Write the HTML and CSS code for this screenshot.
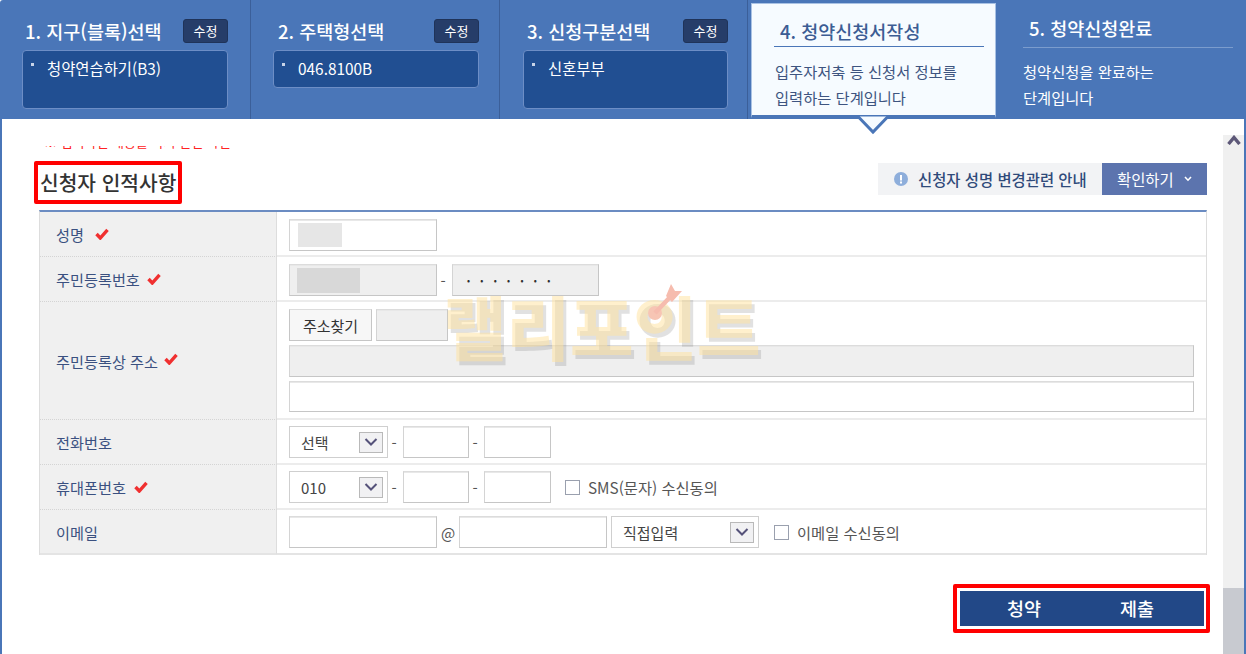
FILE: index.html
```html
<!DOCTYPE html>
<html lang="ko">
<head>
<meta charset="utf-8">
<title>청약신청서작성</title>
<link rel="stylesheet" href="styles.css">
</head>
<body>
<div class="page">
  <header class="steps">
    <section class="step step-1">
      <div class="step-head"><h2>1. 지구(블록)선택</h2><span class="badge">수정</span></div>
      <div class="picked tall"><i></i>청약연습하기(B3)</div>
    </section>
    <section class="step step-2">
      <div class="step-head"><h2>2. 주택형선택</h2><span class="badge">수정</span></div>
      <div class="picked short"><i></i>046.8100B</div>
    </section>
    <section class="step step-3">
      <div class="step-head"><h2>3. 신청구분선택</h2><span class="badge">수정</span></div>
      <div class="picked tall"><i></i>신혼부부</div>
    </section>
    <section class="step-now">
      <h2>4. 청약신청서작성</h2>
      <p>입주자저축 등 신청서 정보를<br>입력하는 단계입니다</p>
      <svg class="pointer" width="36" height="20" viewBox="0 0 36 20"><path d="M0 1.5H3L18 17L33 1.5H36" fill="#f6fbff" stroke="#4a76b8" stroke-width="3"/></svg>
    </section>
    <section class="step-next">
      <h2>5. 청약신청완료</h2>
      <p>청약신청을 완료하는<br>단계입니다</p>
    </section>
  </header>

  <main class="main">
    <div class="content">
      <div class="clipped-note"><span>※ 입력하신 내용을 다시 한번 확인</span></div>
      <div class="section-head">
        <h1 class="section-title">신청자 인적사항</h1>
        <div class="notice">
          <span class="notice-text">
            <svg width="14" height="14" viewBox="0 0 14 14"><circle cx="7" cy="7" r="7" fill="#8eaedb"/><rect x="6" y="3" width="2" height="5.5" fill="#fff"/><rect x="6" y="9.5" width="2" height="2" fill="#fff"/></svg>
            신청자 성명 변경관련 안내
          </span>
          <span class="notice-btn">확인하기
            <svg width="8" height="6" viewBox="0 0 8 6"><path d="M1 1L4 4.2L7 1" fill="none" stroke="#fff" stroke-width="1.6"/></svg>
          </span>
        </div>
      </div>

      <div class="form">
        <div class="row">
          <div class="label">성명<svg class="check gap-w" viewBox="0 0 14 12"><path d="M1.5 6L5.3 10L12.5 1.8" fill="none" stroke="#f03030" stroke-width="3.4"/></svg></div>
          <div class="cell"><div class="field w148"><span class="mosaic m1"></span></div></div>
        </div>
        <div class="row">
          <div class="label">주민등록번호<svg class="check" viewBox="0 0 14 12"><path d="M1.5 6L5.3 10L12.5 1.8" fill="none" stroke="#f03030" stroke-width="3.4"/></svg></div>
          <div class="cell">
            <div class="field w148 off"><span class="mosaic m2"></span></div>
            <span class="sep">-</span>
            <div class="field w147 off dots">•••••••</div>
          </div>
        </div>
        <div class="row row-addr">
          <div class="label">주민등록상 주소<svg class="check up" viewBox="0 0 14 12"><path d="M1.5 6L5.3 10L12.5 1.8" fill="none" stroke="#f03030" stroke-width="3.4"/></svg></div>
          <div class="cell cell-addr">
            <div class="addr-top">
              <button class="find" type="button">주소찾기</button>
              <div class="field w72 off"></div>
            </div>
            <div class="field full off"></div>
            <div class="field full last"></div>
          </div>
        </div>
        <div class="row">
          <div class="label">전화번호</div>
          <div class="cell tight">
            <div class="select w99"><span>선택</span><b class="arrow"><svg width="14" height="8" viewBox="0 0 14 8"><path d="M1.5 1L7 6.5L12.5 1" fill="none" stroke="#55527a" stroke-width="2"/></svg></b></div>
            <span class="sep">-</span><div class="field w66"></div>
            <span class="sep">-</span><div class="field w67"></div>
          </div>
        </div>
        <div class="row">
          <div class="label">휴대폰번호<svg class="check wide" viewBox="0 0 14 12"><path d="M1.5 6L5.3 10L12.5 1.8" fill="none" stroke="#f03030" stroke-width="3.4"/></svg></div>
          <div class="cell tight">
            <div class="select w99"><span>010</span><b class="arrow"><svg width="14" height="8" viewBox="0 0 14 8"><path d="M1.5 1L7 6.5L12.5 1" fill="none" stroke="#55527a" stroke-width="2"/></svg></b></div>
            <span class="sep">-</span><div class="field w66"></div>
            <span class="sep">-</span><div class="field w67"></div>
            <span class="box"></span><span class="agree">SMS(문자) 수신동의</span>
          </div>
        </div>
        <div class="row">
          <div class="label">이메일</div>
          <div class="cell tight">
            <div class="field w148"></div>
            <span class="at">@</span>
            <div class="field w148"></div>
            <div class="select w148 sel-mail"><span>직접입력</span><b class="arrow"><svg width="14" height="8" viewBox="0 0 14 8"><path d="M1.5 1L7 6.5L12.5 1" fill="none" stroke="#55527a" stroke-width="2"/></svg></b></div>
            <span class="box"></span><span class="agree">이메일 수신동의</span>
          </div>
        </div>
      </div>

      <div class="actions">
        <div class="submit-mark"><button class="submit" type="button"><span>청약</span><span>제출</span></button></div>
      </div>
    </div>
    <div class="scrollbar">
      <svg width="14" height="10" viewBox="0 0 14 10"><path d="M1.5 9L7 2.5L12.5 9" fill="none" stroke="#5d5878" stroke-width="3.4"/></svg>
      <div class="thumb"></div>
    </div>

    <div class="watermark">
      <span>랠리포인트</span>
      <svg class="dart" width="44" height="44" viewBox="0 0 44 44"><circle cx="14" cy="29" r="7" fill="#f7c5b4"/><path d="M14 29L31 11" stroke="#f6bcae" stroke-width="4.5"/><path d="M25 12L30 0L34 7L41 7L31 18Z" fill="#f6bcae"/></svg>
    </div>
  </main>
</div>
</body>
</html>
```

FILE: styles.css
```css
* { box-sizing: border-box; }
html, body { margin: 0; padding: 0; background: #fff; }
body {
  font-family: "Noto Sans CJK KR", "Noto Sans", sans-serif;
  font-size: 15.2px;
  color: #333;
  overflow: hidden;
}
h1, h2, p { margin: 0; font-weight: normal; }
.page { display: flex; flex-direction: column; width: 1246px; height: 654px; }

/* step bar */
.steps {
  position: relative;
  z-index: 1;
  display: flex;
  height: 119px;
  flex: none;
  background: #4a76b8;
  border-top-left-radius: 3px;
  color: #fff;
}
.step {
  flex: none;
  height: 119px;
  padding-top: 19px;
  border-right: 1px solid #3b5f99;
}
.step-1 { width: 251px; padding-left: 22px; padding-right: 22px; }
.step-2 { width: 249px; padding-left: 22px; padding-right: 20px; }
.step-3 { width: 248px; padding-left: 23px; padding-right: 19px; }
.step-head {
  display: flex;
  justify-content: space-between;
  align-items: center;
  height: 24px;
  padding-left: 3px;
  margin-bottom: 7px;
}
.step-2 .step-head { padding-left: 5px; }
.step-3 .step-head { padding-left: 4px; }
.step h2, .step-now h2, .step-next h2 {
  font-size: 18.5px;
  font-weight: 500;
  line-height: 24px;
  white-space: nowrap;
}
.badge {
  width: 45px;
  height: 24px;
  background: #263d69;
  border: 1px solid #1f3359;
  border-radius: 3px;
  font-size: 13px;
  line-height: 21px;
  text-align: center;
}
.picked {
  display: flex;
  align-items: flex-start;
  padding: 7px 8px 0;
  background: #214f92;
  border: 1px solid #6d8ec6;
  border-radius: 4px;
  font-size: 15.4px;
  line-height: 20px;
}
.picked i {
  width: 3px;
  height: 3px;
  margin: 5px 13px 0 0;
  background: #c8d4e8;
  flex: none;
}
.tall { height: 59px; }
.short { height: 38px; }

.step-now {
  position: relative;
  flex: none;
  width: 245px;
  height: 115px;
  margin: 3px 0 0 3px;
  padding: 15px 11px 0 22px;
  background: #f6fbff;
  border: 1px solid #a9c2e4;
  border-bottom: 3px solid #4a76b8;
  color: #3d5480;
}
.step-now h2 {
  height: 28px;
  padding-left: 6px;
  border-bottom: 1px solid #4a76b8;
  color: #3c5d94;
}
.step-now p, .step-next p { font-size: 15.3px; line-height: 26px; }
.step-now p { margin-top: 11px; padding-left: 1px; }
.pointer { position: absolute; left: 103px; bottom: -20px; }

.step-next { flex: 1; padding: 16px 13px 0 27px; }
.step-next h2 {
  height: 32px;
  padding-left: 6px;
  border-bottom: 1px solid #7b9ccd;
}
.step-next p { margin-top: 10px; }

/* main */
.main {
  position: relative;
  flex: 1;
  display: flex;
  min-height: 0;
  border-left: 2px solid #4a76b8;
  border-right: 2px solid #4a76b8;
  background: #fff;
}
.content { flex: 1; min-width: 0; padding: 27px 13px 0 32px; }
.scrollbar {
  flex: none;
  width: 21px;
  margin-top: 16px;
  display: flex;
  flex-direction: column;
  align-items: center;
  background: #f0f0f0;
}
.scrollbar svg { flex: none; margin-bottom: 443px; }
.thumb {
  flex: 1;
  align-self: stretch;
  background: #c8cad0;
}
.clipped-note {
  height: 4px;
  padding-left: 10px;
  overflow: hidden;
  color: #f22;
  font-size: 13px;
  white-space: nowrap;
}
.clipped-note span { display: block; line-height: 14px; margin-top: -11px; }
.section-head {
  display: flex;
  justify-content: space-between;
  align-items: flex-start;
  height: 43px;
  margin-top: 11px;
  margin-right: 3px;
}
.section-title {
  width: 148px;
  height: 43px;
  padding-left: 2px;
  border: 4px solid #f00;
  border-radius: 2px;
  font-size: 20.3px;
  font-weight: 500;
  line-height: 35px;
  color: #333;
  white-space: nowrap;
}
.notice { display: flex; height: 32px; margin-top: 2px; font-size: 15.4px; }
.notice-text {
  display: flex;
  align-items: center;
  gap: 10px;
  width: 224px;
  padding-left: 16px;
  background: #f2f3f5;
  color: #2f4a7a;
  font-weight: 500;
  white-space: nowrap;
}
.notice-btn {
  display: flex;
  align-items: center;
  gap: 10px;
  width: 105px;
  padding-left: 15px;
  background: #5c74ae;
  color: #fff;
}

/* form table */
.form {
  margin: 6px 3px 0 5px;
  border-top: 2px solid #6b8cc2;
  border-left: 1px solid #ddd;
  border-right: 1px solid #ddd;
}
.row { display: flex; height: 45px; }
.row-addr { height: 118px; }
.label {
  flex: none;
  display: flex;
  align-items: center;
  width: 237px;
  padding-left: 16px;
  background: #f0f0f0;
  border-right: 1px solid #ddd;
  border-bottom: 1px dotted #d4d4d4;
  color: #3a5080;
}
.check { width: 14px; height: 12px; margin-left: 7px; flex: none; }
.check.gap-w { margin-left: 11px; }
.check.wide { margin-left: 8px; }
.check.up { margin-left: 6px; margin-top: -3px; }
.cell {
  flex: 1;
  display: flex;
  align-items: center;
  padding: 7px 0 4px 12px;
  border-bottom: 2px solid #ececec;
  color: #444;
  font-size: 15px;
}
.cell.tight { padding-top: 6px; padding-bottom: 5px; }
.row:last-child .cell { border-bottom-color: #e4e4e4; }
.row:last-child .label { border-bottom: 2px solid #e4e4e4; }
.cell-addr {
  flex-direction: column;
  align-items: stretch;
  padding: 7px 12px 0;
  gap: 4px;
}
.addr-top { display: flex; gap: 4px; }
.field {
  flex: none;
  display: flex;
  align-items: center;
  height: 32px;
  background: #fff;
  border: 1px solid #c6c6c6;
  border-top-color: #dcdcdc;
  border-left-color: #d4d4d4;
  box-shadow: inset 0 1px 0 #e8e8e8;
}
.field.off { background: #efefef; }
.field.last { height: 31px; }
.full { width: 100%; }
.w148 { width: 148px; }
.w147 { width: 147px; }
.w72 { width: 72px; }
.w66 { width: 66px; }
.w67 { width: 67px; }
.w99 { width: 99px; }
.mosaic { display: block; }
.m1 { width: 44px; height: 24px; margin-left: 8px; background: #e6e6e6; }
.m2 { width: 63px; height: 25px; margin-left: 7px; background: #d8d8d8; }
.dots {
  padding-left: 14px;
  font-size: 9px;
  letter-spacing: 10.3px;
  color: #2e2e2e;
  white-space: nowrap;
}
.sep { flex: none; width: 15px; padding-right: 3px; text-align: center; color: #555; }
.at { flex: none; width: 22px; text-align: center; color: #555; }
.find {
  width: 83px;
  height: 32px;
  padding: 0;
  background: #f7f7f7;
  border: 1px solid #c6c6c6;
  border-top-color: #dcdcdc;
  font: inherit;
  color: #333;
}
.select {
  flex: none;
  display: flex;
  align-items: center;
  justify-content: space-between;
  height: 32px;
  padding: 0 4px 0 11px;
  background: #fff;
  border: 1px solid #cfcfcf;
}
.sel-mail { margin-left: 4px; }
.arrow {
  display: flex;
  align-items: center;
  justify-content: center;
  width: 24px;
  height: 21px;
  background: #f1f1f3;
  border: 1px solid #b9b9b9;
}
.box {
  flex: none;
  width: 15px;
  height: 15px;
  margin-left: 14px;
  margin-right: 8px;
  background: #fff;
  border: 1px solid #9aa0ae;
}
.select + .box { margin-left: 15px; }
.agree { white-space: nowrap; color: #555; font-size: 15.3px; }

/* submit */
.actions { display: flex; justify-content: flex-end; margin-top: 29px; }
.submit-mark {
  width: 257px;
  height: 49px;
  padding: 3px 2px 3px 3px;
  border: 4px solid #f00;
  border-radius: 2px;
  background: #fff;
}
.submit {
  display: flex;
  justify-content: space-between;
  align-items: center;
  width: 100%;
  height: 100%;
  padding: 0 50px 0 47px;
  background: #224887;
  border: 0;
  color: #fff;
  font: 500 18.5px/1 "Noto Sans CJK KR", sans-serif;
}

/* watermark over the form */
.watermark {
  position: absolute;
  left: 441px;
  top: 161px;
  width: 330px;
  height: 90px;
  font-size: 69px;
  font-weight: 900;
  line-height: 90px;
  color: rgba(255, 226, 160, .52);
  text-shadow: 3px 4px 0 rgba(120, 120, 120, .22);
  white-space: nowrap;
  pointer-events: none;
}
.dart { position: absolute; left: 198px; top: 4px; }
```
